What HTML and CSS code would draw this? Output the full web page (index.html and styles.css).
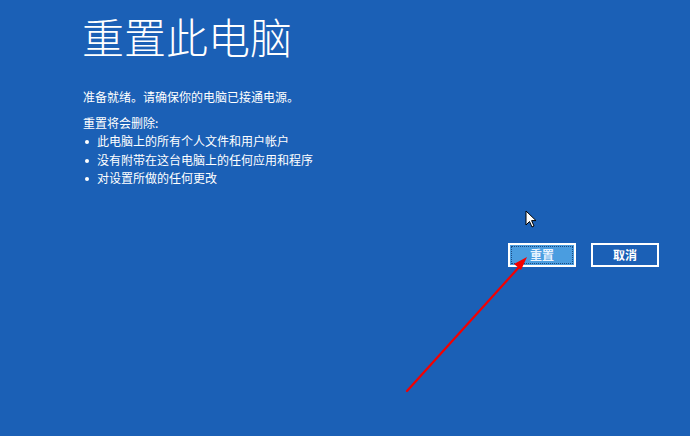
FILE: index.html
```html
<!DOCTYPE html>
<html lang="zh-CN">
<head>
<meta charset="utf-8">
<link rel="stylesheet" href="styles.css">
</head>
<body>
<div class="screen">
  <div class="content">
    <h1 class="title">重置此电脑</h1>
    <p class="ready">准备就绪。请确保你的电脑已接通电源。</p>
    <p class="will">重置将会删除:</p>
    <ul class="list">
      <li>此电脑上的所有个人文件和用户帐户</li>
      <li>没有附带在这台电脑上的任何应用和程序</li>
      <li>对设置所做的任何更改</li>
    </ul>
  </div>
  <div class="actions">
    <button class="btn primary"><span class="focus">重置</span></button>
    <button class="btn">取消</button>
  </div>
  <svg class="cursor" width="14" height="20" viewBox="0 0 14 20">
    <path d="M1 1 L1 15 L4.5 11.5 L7 17 L9 16 L6.6 10.6 L11 10.6 Z" fill="#fff" stroke="#000" stroke-width="1"/>
  </svg>
  <svg class="arrow" width="690" height="436" viewBox="0 0 690 436">
    <line x1="407" y1="391" x2="520" y2="266" stroke="#f40000" stroke-width="2.2" stroke-linecap="round"/>
    <path d="M527 257 L514 264 L521 270 Z" fill="#f40000"/>
  </svg>
</div>
</body>
</html>
```
FILE: styles.css
```css
html, body {
  margin: 0;
  padding: 0;
}
body {
  width: 690px;
  height: 436px;
  overflow: hidden;
  background: #1b60b6;
  font-family: "Noto Sans CJK SC", "Microsoft YaHei", sans-serif;
  color: #fff;
}
.screen {
  position: relative;
  width: 690px;
  height: 436px;
}
.content {
  padding: 11px 0 0 82px;
}
.title {
  margin: 0;
  font-size: 42px;
  font-weight: 300;
  line-height: 50px;
  letter-spacing: 0;
}
.ready {
  margin: 27px 0 0 1px;
  font-size: 12px;
  line-height: 18px;
}
.will {
  margin: 8px 0 0 1px;
  font-size: 12px;
  line-height: 18px;
}
.list {
  margin: 0;
  padding: 0;
  list-style: none;
  font-size: 12px;
}
.list li {
  line-height: 18.5px;
  padding-left: 15px;
  position: relative;
}
.list li::before {
  content: "";
  position: absolute;
  left: 3px;
  top: 8px;
  width: 4px;
  height: 4px;
  border-radius: 50%;
  background: #fff;
}
.actions {
  display: flex;
  justify-content: flex-end;
  gap: 15px;
  margin-top: 55px;
  padding-right: 31px;
}
.btn {
  box-sizing: border-box;
  width: 68px;
  height: 24px;
  border: 2px solid #fff;
  background: #1b60b6;
  color: #fff;
  font-family: "Noto Sans CJK SC", sans-serif;
  font-size: 12px;
  font-weight: 700;
  padding: 0;
  display: flex;
  align-items: center;
  justify-content: center;
}
.btn.primary {
  background: #4a9de0;
  padding: 1px;
  color: #e8f3ff;
}
.focus {
  flex: 1;
  align-self: stretch;
  display: flex;
  align-items: center;
  justify-content: center;
  border: 1px dotted #1d4a80;
}
.cursor {
  position: absolute;
  left: 525px;
  top: 210px;
}
.arrow {
  position: absolute;
  left: 0;
  top: 0;
  pointer-events: none;
}
```
